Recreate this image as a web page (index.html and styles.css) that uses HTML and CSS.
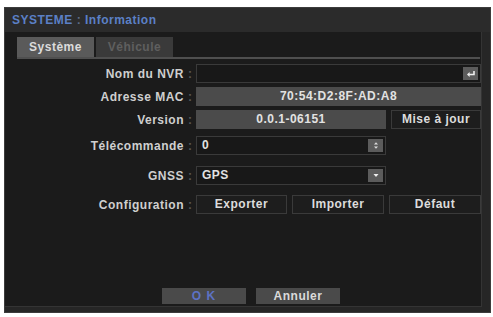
FILE: index.html
```html
<!DOCTYPE html>
<html lang="fr">
<head>
<meta charset="utf-8">
<title>SYSTEME : Information</title>
<link rel="stylesheet" href="styles.css">
</head>
<body>
<div class="window">
  <div class="titlebar"><span class="t-main">SYSTEME</span><span class="t-sep"> : </span><span class="t-main">Information</span></div>
  <div class="body">
    <div class="tabs">
      <div class="tab active">Système</div>
      <div class="tab">Véhicule</div>
    </div>
    <div class="form">
      <div class="label">Nom du NVR</div><div class="colon">:</div>
      <div class="field dark wide with-icon"><span></span>
        <span class="icon">
          <svg width="14" height="11" viewBox="0 0 14 11"><path d="M10 3v3.5H4.5" fill="none" stroke="#eee" stroke-width="1.6"/><path d="M3 6.5l2.6-2.4v4.8z" fill="#eee"/></svg>
        </span>
      </div>

      <div class="label">Adresse MAC</div><div class="colon">:</div>
      <div class="field grey wide center">70:54:D2:8F:AD:A8</div>

      <div class="label">Version</div><div class="colon">:</div>
      <div class="split">
        <div class="field grey center">0.0.1-06151</div>
        <div class="btn">Mise à jour</div>
      </div>

      <div class="label gap1">Télécommande</div><div class="colon gap1">:</div>
      <div class="split gap1">
        <div class="field dark with-icon"><span>0</span>
          <span class="icon">
            <svg width="14" height="11" viewBox="0 0 14 11"><path d="M5 4.5L7 2.3 9 4.5z" fill="#ddd"/><path d="M5 6.5L7 8.7 9 6.5z" fill="#ddd"/></svg>
          </span>
        </div>
      </div>

      <div class="label gap2">GNSS</div><div class="colon gap2">:</div>
      <div class="split gap2">
        <div class="field dark with-icon"><span>GPS</span>
          <span class="icon">
            <svg width="14" height="11" viewBox="0 0 14 11"><path d="M4.5 4L7 7 9.5 4z" fill="#eee"/></svg>
          </span>
        </div>
      </div>

      <div class="label gap3">Configuration</div><div class="colon gap3">:</div>
      <div class="triple gap3">
        <div class="btn">Exporter</div>
        <div class="btn">Importer</div>
        <div class="btn">Défaut</div>
      </div>
    </div>
    <div class="footer">
      <div class="fbtn ok">O K</div>
      <div class="fbtn">Annuler</div>
    </div>
  </div>
</div>
</body>
</html>
```
FILE: styles.css
```css
html, body {
  margin: 0;
  padding: 0;
  background: #ffffff;
}
body {
  width: 493px;
  height: 317px;
  overflow: hidden;
  font-family: "Liberation Sans", Arial, sans-serif;
  font-weight: bold;
  font-size: 12px;
  letter-spacing: 0.5px;
}
.window {
  margin: 7px 0 0 4px;
  width: 487px;
  height: 306px;
  box-sizing: border-box;
  background: #262626;
  border: 1px solid #3c3c3c;
  display: flex;
  flex-direction: column;
}
.titlebar {
  height: 24px;
  line-height: 24px;
  padding-left: 7px;
  background: #2b2b2b;
  flex: none;
}
.t-main { color: #5b80c6; }
.t-sep { color: #5e6d88; }
.body {
  flex: 1;
  margin-right: 8px;
  margin-bottom: 5px;
  background: #1b1b1b;
  border-right: 1px solid #343434;
  border-bottom: 1px solid #343434;
  display: flex;
  flex-direction: column;
}
.tabs {
  margin: 5px 1px 0 12px;
  display: flex;
  gap: 2px;
  border-bottom: 2px solid #4f4f4f;
}
.tab {
  width: 77px;
  height: 20px;
  line-height: 20px;
  text-align: center;
  background: #3a3a3a;
  color: #5f5f5f;
}
.tab.active {
  background: #5a5a5a;
  color: #dcdcdc;
}
.form {
  margin-top: 5px;
  padding-left: 12px;
  display: grid;
  grid-template-columns: 167px 12px 285px;
  row-gap: 4px;
  align-items: center;
}
.label {
  text-align: right;
  color: #cfcfcf;
}
.colon {
  text-align: center;
  color: #575757;
  letter-spacing: 0;
}
.gap1 { margin-top: 3px; }
.gap2 { margin-top: 7px; }
.gap3 { margin-top: 6px; }
.field {
  height: 19px;
  box-sizing: border-box;
  line-height: 17px;
  color: #e2e2e2;
  border: 1px solid #3a3a3a;
  padding: 0 5px;
}
.field.dark { background: #181818; }
.field.grey {
  background: #4b4b4b;
  border-color: #4b4b4b;
}
.center { text-align: center; }
.with-icon {
  display: flex;
  justify-content: space-between;
  align-items: center;
  padding-right: 2px;
}
.icon {
  width: 15px;
  height: 13px;
  background: #5c5c5c;
  display: flex;
  align-items: center;
  justify-content: center;
}
.icon svg { display: block; }
.split {
  display: grid;
  grid-template-columns: 190px 90px;
  column-gap: 5px;
}
.triple {
  display: grid;
  grid-template-columns: 91px 92px 92px;
  column-gap: 5px;
}
.btn {
  height: 19px;
  box-sizing: border-box;
  line-height: 17px;
  text-align: center;
  background: #1d1d1d;
  border: 1px solid #3a3a3a;
  color: #dcdcdc;
}
.footer {
  margin-top: auto;
  margin-bottom: 2px;
  padding-left: 157px;
  display: flex;
  gap: 10px;
}
.fbtn {
  width: 84px;
  height: 16px;
  line-height: 16px;
  text-align: center;
  background: #4a4a4a;
  color: #dadada;
}
.fbtn.ok {
  color: #5d72c4;
  letter-spacing: 1px;
}
```
